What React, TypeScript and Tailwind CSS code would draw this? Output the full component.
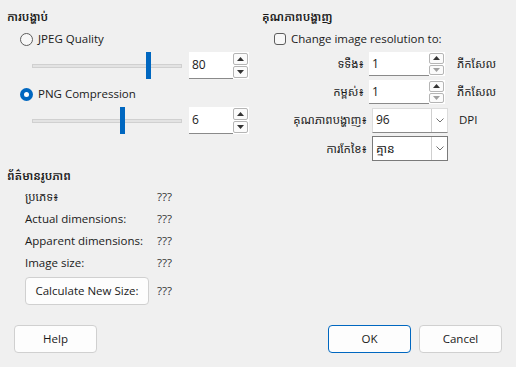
import React from "react";

const font = { fontFamily: '"Open Sans", "Noto Sans", "Noto Sans Khmer", "Khmer OS", sans-serif' };

function Radio({ checked }: { checked?: boolean }) {
  return checked ? (
    <span className="w-[13px] h-[13px] rounded-full bg-[#0067c0] flex items-center justify-center">
      <span className="w-[5px] h-[5px] rounded-full bg-white" />
    </span>
  ) : (
    <span className="w-[13px] h-[13px] rounded-full border border-[#5d5d5d] bg-[#f7f7f7]" />
  );
}

function Arrow({ up, dim }: { up?: boolean; dim?: boolean }) {
  return (
    <svg width="7" height="4" viewBox="0 0 7 4">
      <path d={up ? "M0 4 L3.5 0 L7 4 Z" : "M0 0 L3.5 4 L7 0 Z"} fill={dim ? "#a0a0a0" : "#333"} />
    </svg>
  );
}

function Spin({ value, w, h, downDim }: { value: string; w: string; h: string; downDim?: boolean }) {
  return (
    <div className={`flex ${w} ${h} bg-white`}>
      <div className="flex-1 flex items-center pl-[3px] border-b border-[#8a8a8a] text-[12px] text-[#1a1a1a]">{value}</div>
      <div className="w-[16px] flex flex-col gap-[1px] py-[1px] pr-[1px]">
        <div className="flex-1 border border-[#b5b5b5] rounded-[2px] bg-[#fbfbfb] flex items-center justify-center">
          <Arrow up />
        </div>
        <div className="flex-1 border border-[#b5b5b5] rounded-[2px] bg-[#fbfbfb] flex items-center justify-center">
          <Arrow dim={downDim} />
        </div>
      </div>
    </div>
  );
}

function Combo({ value, focused }: { value: string; focused?: boolean }) {
  return (
    <div
      className={`flex w-[76px] h-[25px] bg-white border ${focused ? "border-[#7a7a7a]" : "border-[#dcdcdc] border-b-[#8a8a8a]"}`}
    >
      <div className="flex-1 flex items-center pl-[3px] text-[12px] text-[#1a1a1a]">{value}</div>
      <div className="w-[16px] border-l border-[#cfcfcf] flex items-center justify-center">
        <svg width="8" height="5" viewBox="0 0 8 5">
          <path d="M0.5 0.5 L4 4 L7.5 0.5" fill="none" stroke="#707070" strokeWidth="1" />
        </svg>
      </div>
    </div>
  );
}

function Slider({ pos }: { pos: number }) {
  return (
    <div className="relative w-[150px] h-[27px] flex items-center">
      <div className="w-full h-[4px] bg-[#e3e3e3] border border-[#d0d0d0]" />
      <div className="absolute top-0 w-[5px] h-[27px] bg-[#0067c0]" style={{ left: pos }} />
    </div>
  );
}

function Btn({ label, w, primary }: { label: string; w: string; primary?: boolean }) {
  return (
    <div
      className={`${w} h-[28px] rounded-[4px] bg-[#fdfdfd] border ${primary ? "border-[#0067c0]" : "border-[#d0d0d0]"} flex items-center justify-center text-[11.5px] text-[#1a1a1a]`}
    >
      {label}
    </div>
  );
}

export default function App() {
  return (
    <div className="w-[516px] h-[367px] bg-[#f0f0f0] text-[11.5px] text-[#1a1a1a] relative overflow-hidden" style={font}>
      <div className="flex">
        {/* compression */}
        <div className="w-[262px] pl-[7px] pt-[8px] flex flex-col">
          <div className="h-[18px] leading-[18px] font-semibold">ការបង្ហាប់</div>
          <div className="flex items-center gap-[5px] pl-[13px] mt-[5px] h-[16px]">
            <Radio />
            <span>JPEG Quality</span>
          </div>
          <div className="flex items-center pl-[25px] mt-[5px] gap-[7px]">
            <Slider pos={114} />
            <Spin value="80" w="w-[60px]" h="h-[27px]" />
          </div>
          <div className="flex items-center gap-[5px] pl-[13px] mt-[7px] h-[16px]">
            <Radio checked />
            <span>PNG Compression</span>
          </div>
          <div className="flex items-center pl-[25px] mt-[5px] gap-[7px]">
            <Slider pos={88} />
            <Spin value="6" w="w-[60px]" h="h-[27px]" />
          </div>
        </div>

        {/* resolution */}
        <div className="flex-1 pt-[8px] flex flex-col">
          <div className="h-[18px] leading-[18px] font-semibold">គុណភាពបង្ហាញ</div>
          <div className="flex items-center gap-[5px] pl-[12px] mt-[5px] h-[16px]">
            <span className="w-[12px] h-[12px] rounded-[3px] border border-[#5d5d5d] bg-[#f7f7f7]" />
            <span>Change image resolution to:</span>
          </div>
          <div className="flex flex-col gap-[4px] mt-[5px]">
            <div className="flex items-center h-[24px]">
              <span className="w-[107px] text-right pr-[5px]">ទទឹង៖</span>
              <Spin value="1" w="w-[76px]" h="h-[24px]" downDim />
              <span className="pl-[12px]">ភីកសែល</span>
            </div>
            <div className="flex items-center h-[24px]">
              <span className="w-[107px] text-right pr-[5px]">កម្ពស់៖</span>
              <Spin value="1" w="w-[76px]" h="h-[24px]" downDim />
              <span className="pl-[12px]">ភីកសែល</span>
            </div>
            <div className="flex items-center h-[24px]">
              <span className="w-[110px] text-right pr-[5px]">គុណភាពបង្ហាញ៖</span>
              <Combo value="96" />
              <span className="pl-[11px]">DPI</span>
            </div>
            <div className="flex items-center h-[25px]">
              <span className="w-[110px] text-right pr-[5px]">ការកែខៃ៖</span>
              <Combo value="គ្មាន" focused />
            </div>
          </div>
        </div>
      </div>

      {/* image info */}
      <div className="pl-[7px] mt-[6px] flex flex-col">
        <div className="h-[18px] leading-[18px] font-semibold">ព័ត៌មានរូបភាព</div>
        <div className="pl-[18px] flex flex-col">
          {["ប្រភេទ៖", "Actual dimensions:", "Apparent dimensions:", "Image size:"].map((l, i) => (
            <div key={l} className={`flex items-center h-[22px] ${i === 0 ? "mt-[1px]" : ""}`}>
              <span className="w-[132px]">{l}</span>
              <span className="text-[#333]">???</span>
            </div>
          ))}
          <div className="flex items-center mt-[3px]">
            <Btn label="Calculate New Size:" w="w-[124px]" />
            <span className="pl-[8px] text-[#333]">???</span>
          </div>
        </div>
      </div>

      {/* footer */}
      <div className="flex items-center px-[14px] mt-[20px]">
        <Btn label="Help" w="w-[83px]" />
        <div className="flex-1" />
        <Btn label="OK" w="w-[83px]" primary />
        <div className="w-[8px]" />
        <Btn label="Cancel" w="w-[83px]" />
      </div>
    </div>
  );
}
